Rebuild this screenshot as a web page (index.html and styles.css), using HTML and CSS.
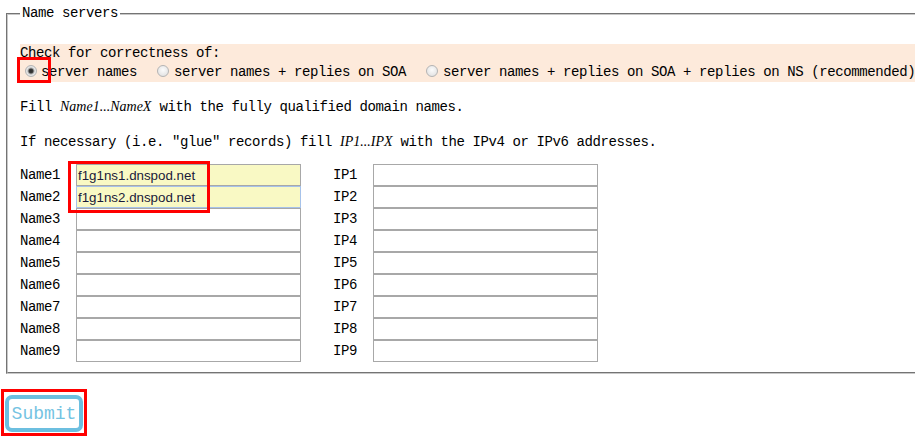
FILE: index.html
```html
<!DOCTYPE html>
<html>
<head>
<meta charset="utf-8">
<link rel="stylesheet" href="styles.css">
</head>
<body>
<form class="form">
  <fieldset class="ns">
    <legend class="ns-legend">Name servers</legend>
    <div class="check">
      <div class="check-title">Check for correctness of:</div>
      <div class="check-options">
        <span class="radio radio-checked"></span><span class="opt">server names</span>
        <span class="radio radio-gap"></span><span class="opt">server names + replies on SOA</span>
        <span class="radio radio-gap"></span><span class="opt">server names + replies on SOA + replies on NS (recommended)</span>
      </div>
    </div>
    <p class="hint hint-first">Fill <i class="it">Name1...NameX</i> with the fully qualified domain names.</p>
    <p class="hint">If necessary (i.e. "glue" records) fill <i class="it">IP1...IPX</i> with the IPv4 or IPv6 addresses.</p>
    <div class="grid">
      <span class="lbl">Name1</span><input class="field filled" value="f1g1ns1.dnspod.net"><span></span><span class="lbl">IP1</span><input class="field">
      <span class="lbl">Name2</span><input class="field filled focused" value="f1g1ns2.dnspod.net"><span></span><span class="lbl">IP2</span><input class="field">
      <span class="lbl">Name3</span><input class="field"><span></span><span class="lbl">IP3</span><input class="field">
      <span class="lbl">Name4</span><input class="field"><span></span><span class="lbl">IP4</span><input class="field">
      <span class="lbl">Name5</span><input class="field"><span></span><span class="lbl">IP5</span><input class="field">
      <span class="lbl">Name6</span><input class="field"><span></span><span class="lbl">IP6</span><input class="field">
      <span class="lbl">Name7</span><input class="field"><span></span><span class="lbl">IP7</span><input class="field">
      <span class="lbl">Name8</span><input class="field"><span></span><span class="lbl">IP8</span><input class="field">
      <span class="lbl">Name9</span><input class="field"><span></span><span class="lbl">IP9</span><input class="field">
    </div>
  </fieldset>
  <button type="button" class="submit">Submit</button>
</form>
<div class="mark mark-radio"></div>
<div class="mark mark-names"></div>
<div class="mark mark-submit"></div>
</body>
</html>
```

FILE: styles.css
```css
html, body {
  margin: 0;
  padding: 0;
  overflow: hidden;
  background: #fff;
}
body {
  font-family: "Liberation Mono", "DejaVu Sans Mono", monospace;
  font-size: 14px;
  letter-spacing: -0.4px;
  color: #000;
  position: relative;
  width: 915px;
  height: 442px;
}
.form {
  margin: 0;
}
.ns {
  margin: 5px 0 0 6px;
  width: 909px;
  min-width: 0;
  padding: 0 0 10px 12px;
  border: 2px groove #c8c8c8;
  border-right: none;
  box-sizing: border-box;
}
.ns-legend {
  padding: 0 2px;
  margin-left: 0;
  line-height: 17px;
}
.check {
  margin-top: 22px;
  background: #fdeadb;
  line-height: 19px;
}
.check-options {
  display: flex;
  align-items: center;
  white-space: pre;
  overflow: hidden;
}
.radio {
  display: inline-block;
  width: 10px;
  height: 10px;
  border-radius: 50%;
  border: 1px solid #b4b4b4;
  background: radial-gradient(circle at 50% 40%, #fbfbfb 0%, #e6e6e6 70%, #d8d8d8 100%);
  margin: 0 4px 0 5px;
  position: relative;
  top: -2px;
  flex: none;
}
.radio-gap {
  margin: 0 5px 0 20px;
}
.radio-checked {
  background: radial-gradient(circle, #2a2a2a 0, #3a3a3a 2px, #9a9a9a 2.8px, #e8e8e8 4px, #d4d4d4 100%);
}
.hint {
  margin: 15px 0 0 0;
  line-height: 19px;
}
.hint + .hint {
  margin-top: 15px;
}
.it {
  font-family: "Liberation Serif", serif;
  font-style: italic;
  font-size: 14px;
  letter-spacing: 0;
}
.grid {
  margin-top: 12px;
  display: grid;
  grid-template-columns: 56px 225px 32px 40px 225px;
  grid-auto-rows: 22px;
  align-items: center;
}
.lbl {
  line-height: 22px;
}
.field {
  box-sizing: border-box;
  width: 225px;
  height: 22px;
  margin: 0;
  border: 1px solid #a8a8a8;
  padding: 0 1px;
  font-family: Arial, "Liberation Sans", sans-serif;
  font-size: 13.33px;
  letter-spacing: 0;
  color: #1a1a3a;
  background: #fff;
  outline: none;
}
.filled {
  background: #f9f9c4;
}
.focused {
  border-color: #a6c2ea;
}
.submit {
  margin: 21px 0 0 5px;
  width: 78px;
  height: 37px;
  border: 4px solid #6cbfe0;
  border-radius: 7px;
  background: #fff;
  color: #74c3e2;
  font-family: "Liberation Mono", monospace;
  font-size: 18px;
  letter-spacing: 0;
  padding: 0;
  display: block;
}
.mark {
  position: absolute;
  border: 3px solid #f00;
  box-sizing: border-box;
}
.mark-radio {
  left: 17px;
  top: 57px;
  width: 34px;
  height: 26px;
}
.mark-names {
  left: 68px;
  top: 161px;
  width: 142px;
  height: 52px;
}
.mark-submit {
  left: 1px;
  top: 389px;
  width: 86px;
  height: 47px;
}
```
